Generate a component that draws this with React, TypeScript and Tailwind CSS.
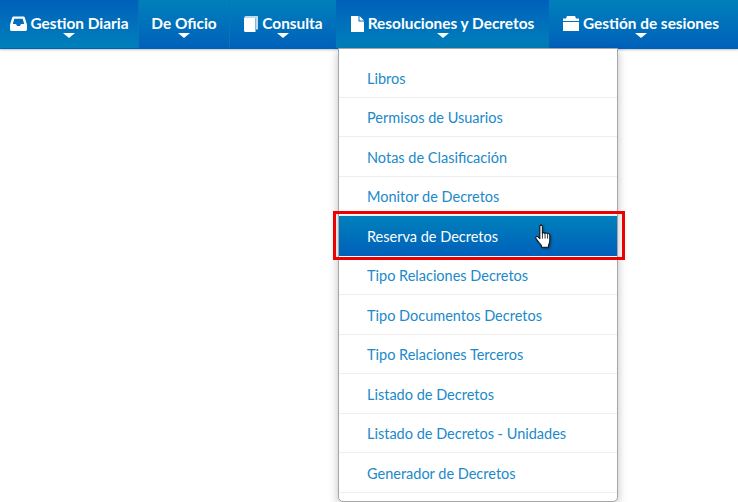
import * as React from "react";

const InboxIcon = () => (
    <svg width="17" height="15" viewBox="0 0 17 15">
        <path
            fillRule="evenodd"
            d="M3.500.500h10c.6 0 1 .3 1.200.8l2 6.500c.2.500.3.900.3 1.400v4c0 1-.8 1.800-1.800 1.800H1.800C.8 15 0 14.200 0 13.200v-4c0-.5.100-.9.300-1.400l2-6.500C2.500.800 2.900.500 3.500.500zM4.300 2.700L2.800 8h3.200l1 2h3l1-2h3.200l-1.500-5.300H4.300z"
            fill="#fff"
        />
    </svg>
);

const BookIcon = () => (
    <svg width="15" height="16" viewBox="0 0 15 16">
        <path d="M3 0h12v13.500H13V2H3.500C2.500 2 2 2.400 2 3H1C1 1 1.800 0 3 0z" fill="#fff" opacity=".75" />
        <path d="M1 3c0-.6.600-1 1.500-1H12.500v14H2.500C1.500 16 1 15.400 1 14.500z" fill="#fff" />
    </svg>
);

const FileIcon = () => (
    <svg width="13" height="16" viewBox="0 0 13 16">
        <path d="M0 0h7.500v5.500H13V16H0z" fill="#fff" />
        <path d="M8.500 0L13 4.500H8.500z" fill="#fff" />
    </svg>
);

const BriefcaseIcon = () => (
    <svg width="16" height="15" viewBox="0 0 16 15">
        <path d="M4 0h8l1 2.500h3v2.500H0V2.500h3z" fill="#fff" />
        <path d="M0 6h16v9H0z" fill="#fff" />
    </svg>
);

const navItems = [
    { label: "Gestion Diaria", icon: <InboxIcon />, width: "w-[139px]", active: true, divider: true },
    { label: "De Oficio", width: "w-[91px]", divider: true },
    { label: "Consulta", icon: <BookIcon />, width: "w-[106px]" },
    { label: "Resoluciones y Decretos", icon: <FileIcon />, width: "w-[213px]", active: true },
    { label: "Gestión de sesiones", icon: <BriefcaseIcon />, width: "flex-1 pr-[5px]" },
];

const menuItems = [
    "Libros",
    "Permisos de Usuarios",
    "Notas de Clasificación",
    "Monitor de Decretos",
    "Reserva de Decretos",
    "Tipo Relaciones Decretos",
    "Tipo Documentos Decretos",
    "Tipo Relaciones Terceros",
    "Listado de Decretos",
    "Listado de Decretos - Unidades",
    "Generador de Decretos",
];

const HandCursor = () => (
    <svg
        width="19"
        height="24"
        viewBox="0 0 17 23"
        className="absolute top-[224px] left-[534px] drop-shadow-[1px_1px_1px_rgba(0,0,0,0.4)]"
    >
        <path
            d="M5 2.200c0-1.500 2.400-1.500 2.400 0V9c.3-1 2.300-1 2.500.2.400-.9 2.200-.8 2.400.4.500-.7 2.200-.5 2.200 1V16c0 2-.8 3-1.200 4.500v1.700H6.500v-1.700C5 18.500 2.500 16 1.300 13.800c-.8-1.500.8-2.600 2-1.500L5 14V2.200z"
            fill="#fff"
            stroke="#111"
            strokeWidth="1"
            strokeLinejoin="round"
        />
        <path d="M7.500 9v5M10 9.500V14M12.400 10v4" stroke="#111" strokeWidth=".8" />
    </svg>
);

const App = () => {
    return (
        <div className="relative h-[502px] w-[738px] overflow-hidden bg-white font-['Lato','Noto_Sans',sans-serif]">
            <nav className="flex h-[49px] bg-linear-to-b from-[#0080bb] to-[#0060bb] shadow-[0_1px_2px_rgba(0,0,0,0.25)]">
                {navItems.map((item) => (
                    <div
                        key={item.label}
                        className={`flex h-[48px] flex-col items-center pt-[14px] text-[15.4px] leading-[19px] font-bold text-white ${item.width} ${
                            item.active ? "bg-linear-to-b from-[#0060bb] to-[#0080bb]" : ""
                        } ${item.divider ? "border-r border-[#0a74b4]" : ""}`}
                    >
                        <div className="flex items-center gap-[4px]">
                            {item.icon}
                            <span>{item.label}</span>
                        </div>
                        <span className="h-0 w-0 border-x-[6.5px] border-t-[5.5px] border-x-transparent border-t-white" />
                    </div>
                ))}
            </nav>

            <div className="absolute top-[48px] left-[338px] w-[280px] rounded-b-[5px] border border-[#a6a6a6] bg-white pt-[9px] pb-[8px] shadow-[0_3px_10px_rgba(0,0,0,0.25)]">
                {menuItems.map((item) => (
                    <div
                        key={item}
                        className={`flex h-[39.5px] items-center pt-[3px] pl-[28px] text-[14.5px] ${
                            item === "Reserva de Decretos"
                                ? "bg-linear-to-b from-[#0080bb] to-[#0060bb] text-white"
                                : "border-b border-[#eeeeee] text-[#2089c9]"
                        }`}
                    >
                        {item}
                    </div>
                ))}
            </div>

            <div className="absolute top-[211px] left-[333px] h-[49px] w-[292px] border-[3px] border-[#ee0000]" />
            <HandCursor />
        </div>
    );
};

export default App;
